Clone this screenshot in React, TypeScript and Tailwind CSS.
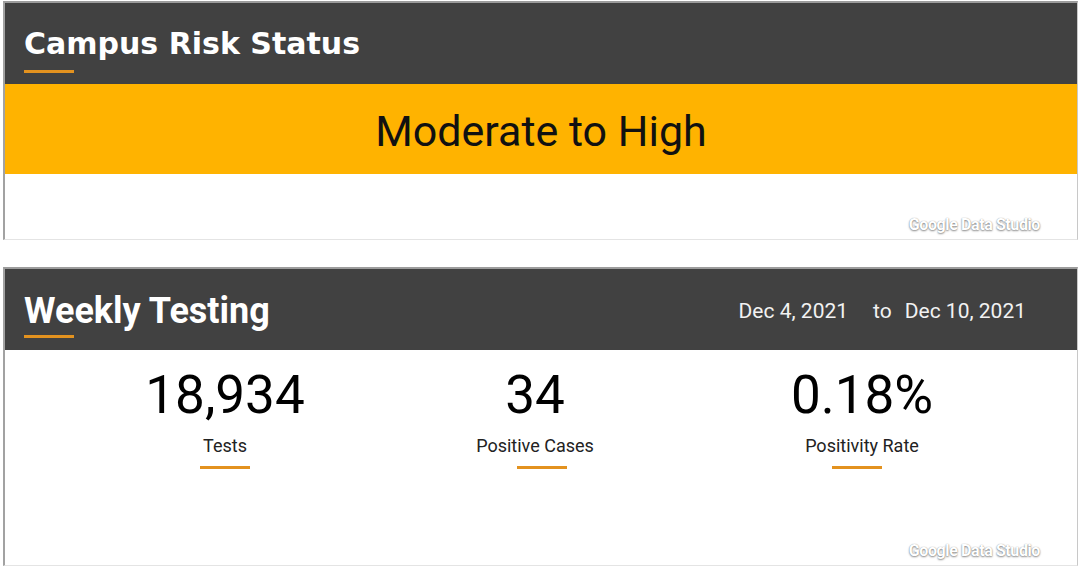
import React from 'react';

const STATS = [
  { value: '18,934', label: 'Tests', width: 'w-[300px]', bar: '' },
  { value: '34', label: 'Positive Cases', width: 'w-[300px] ml-[10px]', bar: 'ml-[14px]' },
  { value: '0.18%', label: 'Positivity Rate', width: 'w-[300px] ml-[27px]', bar: 'mr-[10px]' },
];

const Watermark = () => (
  <span
    className="text-[16px] font-bold tracking-[-0.4px] text-white"
    style={{ textShadow: '0 1px 2px rgba(0,0,0,0.45), 0 0 1px rgba(0,0,0,0.35)' }}
  >
    Google Data Studio
  </span>
);

export default function App() {
  return (
    <div className="w-[1080px] h-[577px] bg-white pt-[1px] pl-[3px] pr-[2px] font-['Roboto',sans-serif] overflow-hidden">
      {/* Campus Risk Status */}
      <section className="border-t-2 border-l-2 border-r border-b border-t-[#9c9c9c] border-l-[#a2a2a2] border-r-[#c8c8c8] border-b-[#e4e4e4]">
        <header className="h-[81px] bg-[#414141] px-[19px] pt-[23px]">
          <h1 className="text-[30px] leading-[36px] font-bold text-white font-['DejaVu_Sans',sans-serif]">
            Campus Risk Status
          </h1>
          <div className="mt-[8px] h-[3px] w-[50px] bg-[#e3921f]" />
        </header>
        <div className="h-[90px] bg-[#ffb300] flex items-center justify-center">
          <span className="text-[43px] text-[#111] pt-[4px]">Moderate to High</span>
        </div>
        <div className="h-[65px] flex items-end justify-end pr-[37px] pb-[2px]">
          <Watermark />
        </div>
      </section>

      {/* Weekly Testing */}
      <section className="mt-[27px] border-t-2 border-l-2 border-r border-b border-t-[#9c9c9c] border-l-[#a2a2a2] border-r-[#c8c8c8] border-b-[#e4e4e4]">
        <header className="h-[81px] bg-[#414141] px-[19px] flex items-start justify-between">
          <div className="pt-[22px]">
            <h2 className="text-[36px] leading-[41px] font-bold text-white">Weekly Testing</h2>
            <div className="mt-[3px] h-[3px] w-[50px] bg-[#e3921f]" />
          </div>
          <div className="pt-[27px] pr-[32px] flex items-center text-[21px] text-[#f2f2f2]">
            <span>Dec 4, 2021</span>
            <span className="ml-[25px]">to</span>
            <span className="ml-[13px]">Dec 10, 2021</span>
          </div>
        </header>
        <div className="h-[215px] flex flex-col">
          <div className="flex pl-[70px] pt-[15px]">
            {STATS.map(s => (
              <div key={s.label} className={`${s.width} flex flex-col items-center`}>
                <span className="text-[53px] leading-[60px] text-black">{s.value}</span>
                <span className="mt-[10px] text-[18px] leading-[22px] text-[#222]">{s.label}</span>
                <div className={`${s.bar} mt-[9px] h-[3px] w-[50px] bg-[#e3921f]`} />
              </div>
            ))}
          </div>
          <div className="mt-auto flex justify-end pr-[37px] pb-[2px]">
            <Watermark />
          </div>
        </div>
      </section>
    </div>
  );
}
